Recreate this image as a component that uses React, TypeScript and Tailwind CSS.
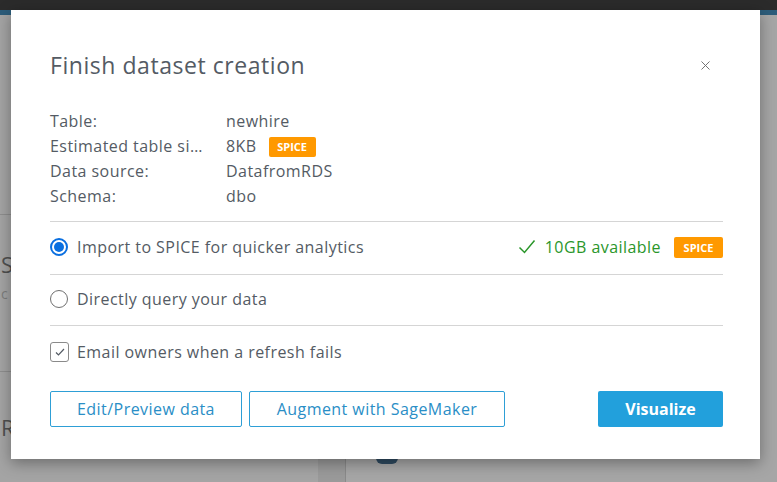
import { X } from "lucide-react";

function Spice({ className = "" }: { className?: string }) {
  return (
    <span
      className={`inline-flex items-center justify-center rounded-[2px] bg-[#ff9900] text-[11px] font-bold leading-none tracking-normal text-white ${className}`}
    >
      SPICE
    </span>
  );
}

const details = [
  { label: "Table:", value: "newhire" },
  { label: "Estimated table si…", value: "8KB", spice: true },
  { label: "Data source:", value: "DatafromRDS" },
  { label: "Schema:", value: "dbo" },
];

export default function App() {
  return (
    <div className="relative h-[482px] w-[777px] overflow-hidden bg-[#a2a2a2] font-['Open_Sans',sans-serif] text-[#545b64]">
      {/* page behind the dimmed overlay */}
      <div className="h-[10px] bg-[#2b2b2b]" />
      <div className="h-[5px] bg-[#2c5c7a]" />
      <div className="flex h-[467px]">
        <div className="flex w-[318px] flex-col bg-[#a4a4a4]">
          <div className="h-[200px] border-b border-[#8e8e8e]" />
          <div className="flex h-[157px] flex-col border-b border-[#8e8e8e] pl-[1px] pt-[34px]">
            <span className="text-[22px] leading-[30px] text-[#505050]">S</span>
            <span className="text-[14px] leading-[30px] text-[#7c7c7c]">c</span>
          </div>
          <div className="flex flex-1 items-center pl-[1px] text-[22px] text-[#505050]">R</div>
        </div>
        <div className="w-[27px] bg-[#9a9a9a]" />
        <div className="flex-1 border-l border-[#8a8a8a] bg-[#a6a6a6]" />
      </div>
      <div className="absolute left-[376px] top-[452px] h-[12px] w-[22px] rounded-full bg-[#2e4a60]" />

      {/* modal */}
      <div className="absolute left-[11px] top-[10px] flex h-[449px] w-[749px] flex-col bg-white pl-[39px] pr-[37px] pt-[40px] tracking-[0.45px] shadow-[0_4px_14px_rgba(0,0,0,0.35)]">
        <div className="flex items-center justify-between">
          <h2 className="text-[23px] leading-[30px] tracking-[0.55px] text-[#545b64]">Finish dataset creation</h2>
          <X className="mr-[10px] h-[15px] w-[15px] text-[#6b6b6b]" strokeWidth={1.5} />
        </div>

        <div className="mt-[29px] flex flex-col text-[16px] leading-[25px]">
          {details.map((d) => (
            <div key={d.label} className="flex items-center">
              <span className="w-[176px]">{d.label}</span>
              <span>{d.value}</span>
              {d.spice && <Spice className="ml-[12px] h-[20px] w-[47px]" />}
            </div>
          ))}
        </div>

        <div className="mt-[12px] flex flex-col border-t border-[#d5d5d5] text-[16px]">
          <div className="flex h-[53px] items-center border-b border-[#d5d5d5] pb-[2px]">
            <span className="flex h-[18px] w-[18px] items-center justify-center rounded-full border-2 border-[#0a6fe0]">
              <span className="h-[10px] w-[10px] rounded-full bg-[#0a6fe0]" />
            </span>
            <span className="ml-[9px]">Import to SPICE for quicker analytics</span>
            <span className="ml-auto flex items-center text-[#2a962a]">
              <svg viewBox="0 0 18 16" className="mr-[9px] h-[16px] w-[18px]" fill="none" stroke="currentColor" strokeWidth="1.5">
                <path d="M1.5 8.5 L6.5 13.5 L16.5 1.5" />
              </svg>
              10GB available
            </span>
            <Spice className="ml-[13px] h-[21px] w-[49px]" />
          </div>
          <div className="flex h-[51px] items-center border-b border-[#d5d5d5] pb-[2px]">
            <span className="h-[18px] w-[18px] rounded-full border border-[#707070]" />
            <span className="ml-[9px]">Directly query your data</span>
          </div>
          <div className="flex h-[52px] items-center">
            <span className="flex h-[20px] w-[19px] items-center justify-center rounded-[3px] border border-[#8a8a8a]">
              <svg viewBox="0 0 10 8" className="h-[8px] w-[10px]" fill="none" stroke="#545b64" strokeWidth="1.2">
                <path d="M1 4.5 L3.5 7 L9 1" />
              </svg>
            </span>
            <span className="ml-[8px]">Email owners when a refresh fails</span>
          </div>
        </div>

        <div className="mt-[13px] flex items-center text-[16px]">
          <button className="h-[36px] w-[192px] rounded-[2px] border border-[#2e9fd6] text-[#2a8ec6]">
            Edit/Preview data
          </button>
          <button className="ml-[7px] h-[36px] w-[256px] rounded-[2px] border border-[#2e9fd6] text-[#2a8ec6]">
            Augment with SageMaker
          </button>
          <button className="ml-auto h-[36px] w-[125px] rounded-[2px] bg-[#22a0dc] font-bold tracking-normal text-white">
            Visualize
          </button>
        </div>
      </div>
    </div>
  );
}
